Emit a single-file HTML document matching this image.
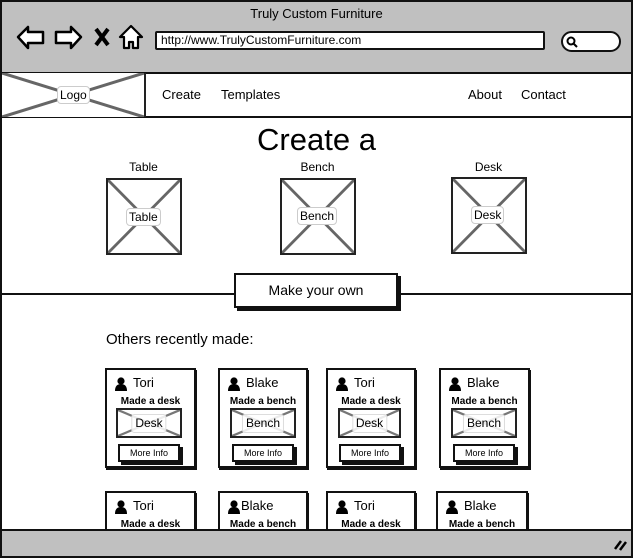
<!DOCTYPE html>
<html><head><meta charset="utf-8"><style>
*{box-sizing:border-box;margin:0;padding:0}
body{width:633px;height:558px;overflow:hidden;background:#fff;font-family:"Liberation Sans",sans-serif;color:#000;position:relative}
.a{position:absolute}
.xbox{position:absolute;border:2px solid #222;background:#fff;overflow:hidden}
.xbox svg{position:absolute;left:0;top:0;width:100%;height:100%}
.lbl{position:absolute;background:#fff;border:1px solid #ccc;border-radius:4px;padding:0 2px;line-height:16px}
.card{position:absolute;border:2px solid #111;background:#fff;box-shadow:1px 2px 0 #111;overflow:hidden}
.nm{position:absolute;left:26px;top:5px;font-size:13px}
.md{position:absolute;left:0;right:0;top:26px;text-align:center;font-size:10px;font-weight:bold}
.btn{position:absolute;border:2px solid #111;background:#fff;box-shadow:3px 3px 0 #111;text-align:center;font-size:9px}
.ic{position:absolute;left:8px;top:7px}
.sl{position:absolute;left:50%;transform:translateX(-50%);top:4px;background:rgba(255,255,255,.85);border:1px solid #ddd;border-radius:3px;padding:0 3px;font-size:12px;line-height:17px}
</style></head><body>
<div class="a" style="left:0;top:0;width:633px;height:72px;background:#c0c0c0;border:2px solid #111;border-bottom:none"></div>
<div class="a" style="left:0;top:6px;width:633px;text-align:center;font-size:13px">Truly Custom Furniture</div>
<svg class="a" style="left:14px;top:24px" width="135" height="28" viewBox="0 0 135 28">
<path d="M4 13 L14 3 L14 8 L29 8 L29 19 L14 19 L14 24 Z" fill="#fff" stroke="#000" stroke-width="2.5" stroke-linejoin="round"/>
<path d="M67 13 L57 3 L57 8 L42 8 L42 19 L57 19 L57 24 Z" fill="#fff" stroke="#000" stroke-width="2.5" stroke-linejoin="round"/>
<path d="M82 5 L94 21 M94 5 L82 21" stroke="#000" stroke-width="4"/>
<path d="M117 2 L106 13 L110 13 L110 24 L115 24 L115 18 L119 18 L119 24 L124 24 L124 13 L128 13 Z" fill="#fff" stroke="#000" stroke-width="2.2" stroke-linejoin="round"/>
</svg>
<div class="a" style="left:155px;top:31px;width:390px;height:19px;background:#fff;border:2px solid #111;border-radius:2px;font-size:12px;padding-left:4px;line-height:15px">http://www.TrulyCustomFurniture.com</div>
<div class="a" style="left:561px;top:31px;width:60px;height:21px;background:#fff;border:2px solid #111;border-radius:11px"></div>
<svg class="a" style="left:566px;top:36px" width="12" height="12"><circle cx="5" cy="5" r="3.5" fill="none" stroke="#000" stroke-width="2"/><path d="M7 7 L11 11" stroke="#000" stroke-width="2"/></svg>
<div class="a" style="left:0;top:72px;width:633px;height:46px;border:2px solid #111;background:#fff"></div>
<div class="xbox" style="left:2px;top:73px;width:144px;height:44px;border-width:0 2px 0 0">
<svg viewBox="0 0 144 44" preserveAspectRatio="none"><path d="M0 0 L144 44 M144 0 L0 44" stroke="#666" stroke-width="3"/></svg>
<div class="lbl" style="left:55px;top:13px;font-size:12px">Logo</div></div>
<div class="a" style="left:162px;top:87px;font-size:13px">Create</div>
<div class="a" style="left:221px;top:87px;font-size:13px">Templates</div>
<div class="a" style="left:468px;top:87px;font-size:13px">About</div>
<div class="a" style="left:521px;top:87px;font-size:13px">Contact</div>
<div class="a" style="left:0;top:118px;width:633px;height:414px;border-left:2px solid #111;border-right:2px solid #111"></div>
<div class="a" style="left:0;top:122px;width:633px;text-align:center;font-size:31px">Create a</div>
<div class="a" style="left:106px;top:160px;width:75px;text-align:center;font-size:12px">Table</div>
<div class="a" style="left:280px;top:160px;width:75px;text-align:center;font-size:12px">Bench</div>
<div class="a" style="left:451px;top:160px;width:75px;text-align:center;font-size:12px">Desk</div>
<div class="xbox" style="left:106px;top:178px;width:76px;height:77px"><svg viewBox="0 0 76 77" preserveAspectRatio="none"><path d="M0 0 L76 77 M76 0 L0 77" stroke="#666" stroke-width="3"/></svg><div class="lbl" style="left:18px;top:28px;font-size:12px">Table</div></div>
<div class="xbox" style="left:280px;top:178px;width:76px;height:77px"><svg viewBox="0 0 76 77" preserveAspectRatio="none"><path d="M0 0 L76 77 M76 0 L0 77" stroke="#666" stroke-width="3"/></svg><div class="lbl" style="left:15px;top:27px;font-size:12px">Bench</div></div>
<div class="xbox" style="left:451px;top:177px;width:76px;height:77px"><svg viewBox="0 0 76 77" preserveAspectRatio="none"><path d="M0 0 L76 77 M76 0 L0 77" stroke="#666" stroke-width="3"/></svg><div class="lbl" style="left:18px;top:27px;font-size:12px">Desk</div></div>
<div class="a" style="left:0;top:293px;width:633px;height:2px;background:#111"></div>
<div class="a" style="left:234px;top:273px;width:164px;height:35px;border:2px solid #111;background:#fff;box-shadow:3px 3px 0 #111;text-align:center;font-size:14px;line-height:31px">Make your own</div>
<div class="a" style="left:106px;top:331px;font-size:15px">Others recently made:</div>
<svg width="0" height="0" style="position:absolute"><defs><symbol id="p" viewBox="0 0 12 14"><circle cx="6" cy="4" r="3.6"/><path d="M0 14 Q0 7 6 7 Q12 7 12 14 Z"/></symbol></defs></svg>
<div class="card" style="left:105px;top:368px;width:91px;height:100px"><svg class="ic" width="12" height="14"><use href="#p"/></svg><div class="nm">Tori</div><div class="md">Made a desk</div>
<div class="xbox" style="left:9px;top:38px;width:66px;height:30px"><svg viewBox="0 0 66 30" preserveAspectRatio="none"><path d="M0 0 L66 30 M66 0 L0 30" stroke="#777" stroke-width="2.5"/></svg><div class="sl">Desk</div></div>
<div class="btn" style="left:11px;top:74px;width:62px;height:18px;line-height:14px">More Info</div></div>
<div class="card" style="left:218px;top:368px;width:90px;height:100px"><svg class="ic" width="12" height="14"><use href="#p"/></svg><div class="nm">Blake</div><div class="md">Made a bench</div>
<div class="xbox" style="left:10px;top:38px;width:66px;height:30px"><svg viewBox="0 0 66 30" preserveAspectRatio="none"><path d="M0 0 L66 30 M66 0 L0 30" stroke="#777" stroke-width="2.5"/></svg><div class="sl">Bench</div></div>
<div class="btn" style="left:12px;top:74px;width:62px;height:18px;line-height:14px">More Info</div></div>
<div class="card" style="left:326px;top:368px;width:90px;height:100px"><svg class="ic" width="12" height="14"><use href="#p"/></svg><div class="nm">Tori</div><div class="md">Made a desk</div>
<div class="xbox" style="left:10px;top:38px;width:63px;height:30px"><svg viewBox="0 0 63 30" preserveAspectRatio="none"><path d="M0 0 L63 30 M63 0 L0 30" stroke="#777" stroke-width="2.5"/></svg><div class="sl">Desk</div></div>
<div class="btn" style="left:11px;top:74px;width:62px;height:18px;line-height:14px">More Info</div></div>
<div class="card" style="left:439px;top:368px;width:91px;height:100px"><svg class="ic" width="12" height="14"><use href="#p"/></svg><div class="nm">Blake</div><div class="md">Made a bench</div>
<div class="xbox" style="left:10px;top:38px;width:66px;height:30px"><svg viewBox="0 0 66 30" preserveAspectRatio="none"><path d="M0 0 L66 30 M66 0 L0 30" stroke="#777" stroke-width="2.5"/></svg><div class="sl">Bench</div></div>
<div class="btn" style="left:12px;top:74px;width:62px;height:18px;line-height:14px">More Info</div></div>
<div class="card" style="left:105px;top:491px;width:91px;height:50px"><svg class="ic" width="12" height="14"><use href="#p"/></svg><div class="nm">Tori</div><div class="md">Made a desk</div></div>
<div class="card" style="left:218px;top:491px;width:90px;height:50px"><svg class="ic" width="12" height="14" style="left:8px"><use href="#p"/></svg><div class="nm" style="left:21px">Blake</div><div class="md">Made a bench</div></div>
<div class="card" style="left:326px;top:491px;width:90px;height:50px"><svg class="ic" width="12" height="14"><use href="#p"/></svg><div class="nm">Tori</div><div class="md">Made a desk</div></div>
<div class="card" style="left:436px;top:491px;width:92px;height:50px"><svg class="ic" width="12" height="14"><use href="#p"/></svg><div class="nm">Blake</div><div class="md">Made a bench</div></div>
<div class="a" style="left:0;top:529px;width:633px;height:29px;background:#c0c0c0;border:2px solid #111"></div>
<svg class="a" style="left:612px;top:536px" width="16" height="16"><path d="M3 13 L9 5 M8 14 L14 6" stroke="#000" stroke-width="2.5"/></svg>
</body></html>
